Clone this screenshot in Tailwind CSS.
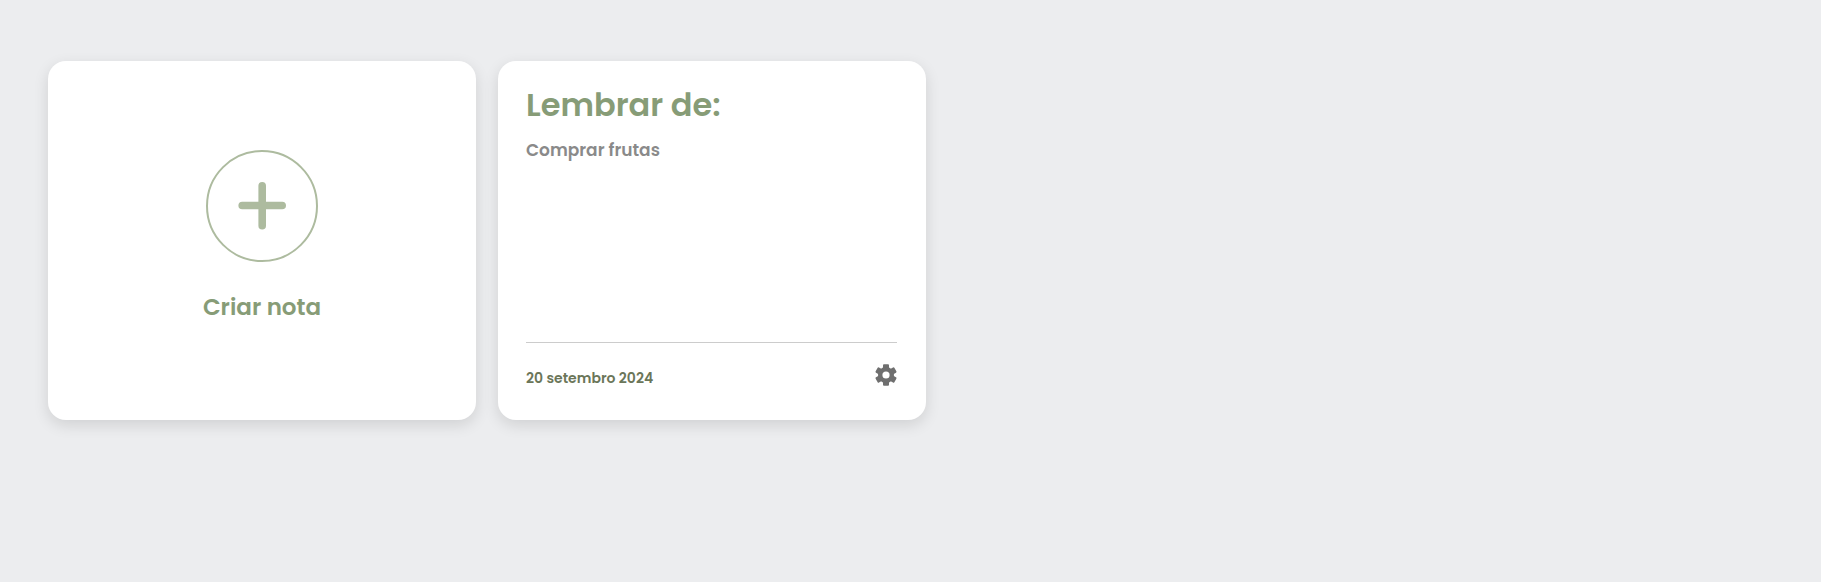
<!DOCTYPE html>
<html lang="pt-BR">
<head>
<meta charset="utf-8">
<meta name="viewport" content="width=device-width, initial-scale=1">
<title>Notas</title>
<script src="https://cdn.jsdelivr.net/npm/@tailwindcss/browser@4"></script>
</head>
<body class="min-h-screen bg-[#ecedef] font-['Poppins','Inter',sans-serif]">
<main class="flex flex-wrap gap-[22px] px-12 py-[61px]">
  <button type="button" class="flex min-h-[359px] w-full max-w-[428px] cursor-pointer flex-col items-center rounded-[18px] bg-white pt-[89px] text-[#879c77] shadow-[0_5px_15px_rgba(0,0,0,0.12)]">
    <span class="flex size-28 items-center justify-center rounded-full border-2 border-[#adbb9f]">
      <svg class="size-12" viewBox="0 0 48 48" fill="none" stroke="#adbb9f" stroke-width="7.6" stroke-linecap="round" aria-hidden="true"><path d="M24.200 3.800v40M4.200 23.500h40"/></svg>
    </span>
    <span class="mt-[29px] text-[23px] leading-8 font-semibold">Criar nota</span>
  </button>
  <article class="flex min-h-[359px] w-full max-w-[428px] flex-col rounded-[18px] bg-white pt-6 pr-[29px] pb-[30px] pl-7 shadow-[0_5px_15px_rgba(0,0,0,0.12)]">
    <h2 class="text-[32px] leading-10 font-semibold text-[#879c77]">Lembrar de:</h2>
    <p class="mt-3 text-[17px] leading-[26px] font-semibold text-[#8a8a8a]">Comprar frutas</p>
    <footer class="mt-auto flex items-start justify-between border-t border-[#cccccc] pt-[19px]">
      <time datetime="2024-09-20" class="pt-1 text-sm leading-6 font-semibold text-[#6b7659]">20 setembro 2024</time>
      <button type="button" aria-label="Configurações" class="cursor-pointer pt-0.5 text-[#6f6f6f]">
        <svg class="size-[22px]" viewBox="0 0 22 22" fill="currentColor" aria-hidden="true">
          <rect x="8" y="0.200" width="6" height="21.600" rx="1"/>
          <rect x="8" y="0.200" width="6" height="21.600" rx="1" transform="rotate(60 11 11)"/>
          <rect x="8" y="0.200" width="6" height="21.600" rx="1" transform="rotate(120 11 11)"/>
          <circle cx="11" cy="11" r="8"/>
          <circle cx="11" cy="11" r="3.600" fill="#fff"/>
        </svg>
      </button>
    </footer>
  </article>
</main>
</body>
</html>
